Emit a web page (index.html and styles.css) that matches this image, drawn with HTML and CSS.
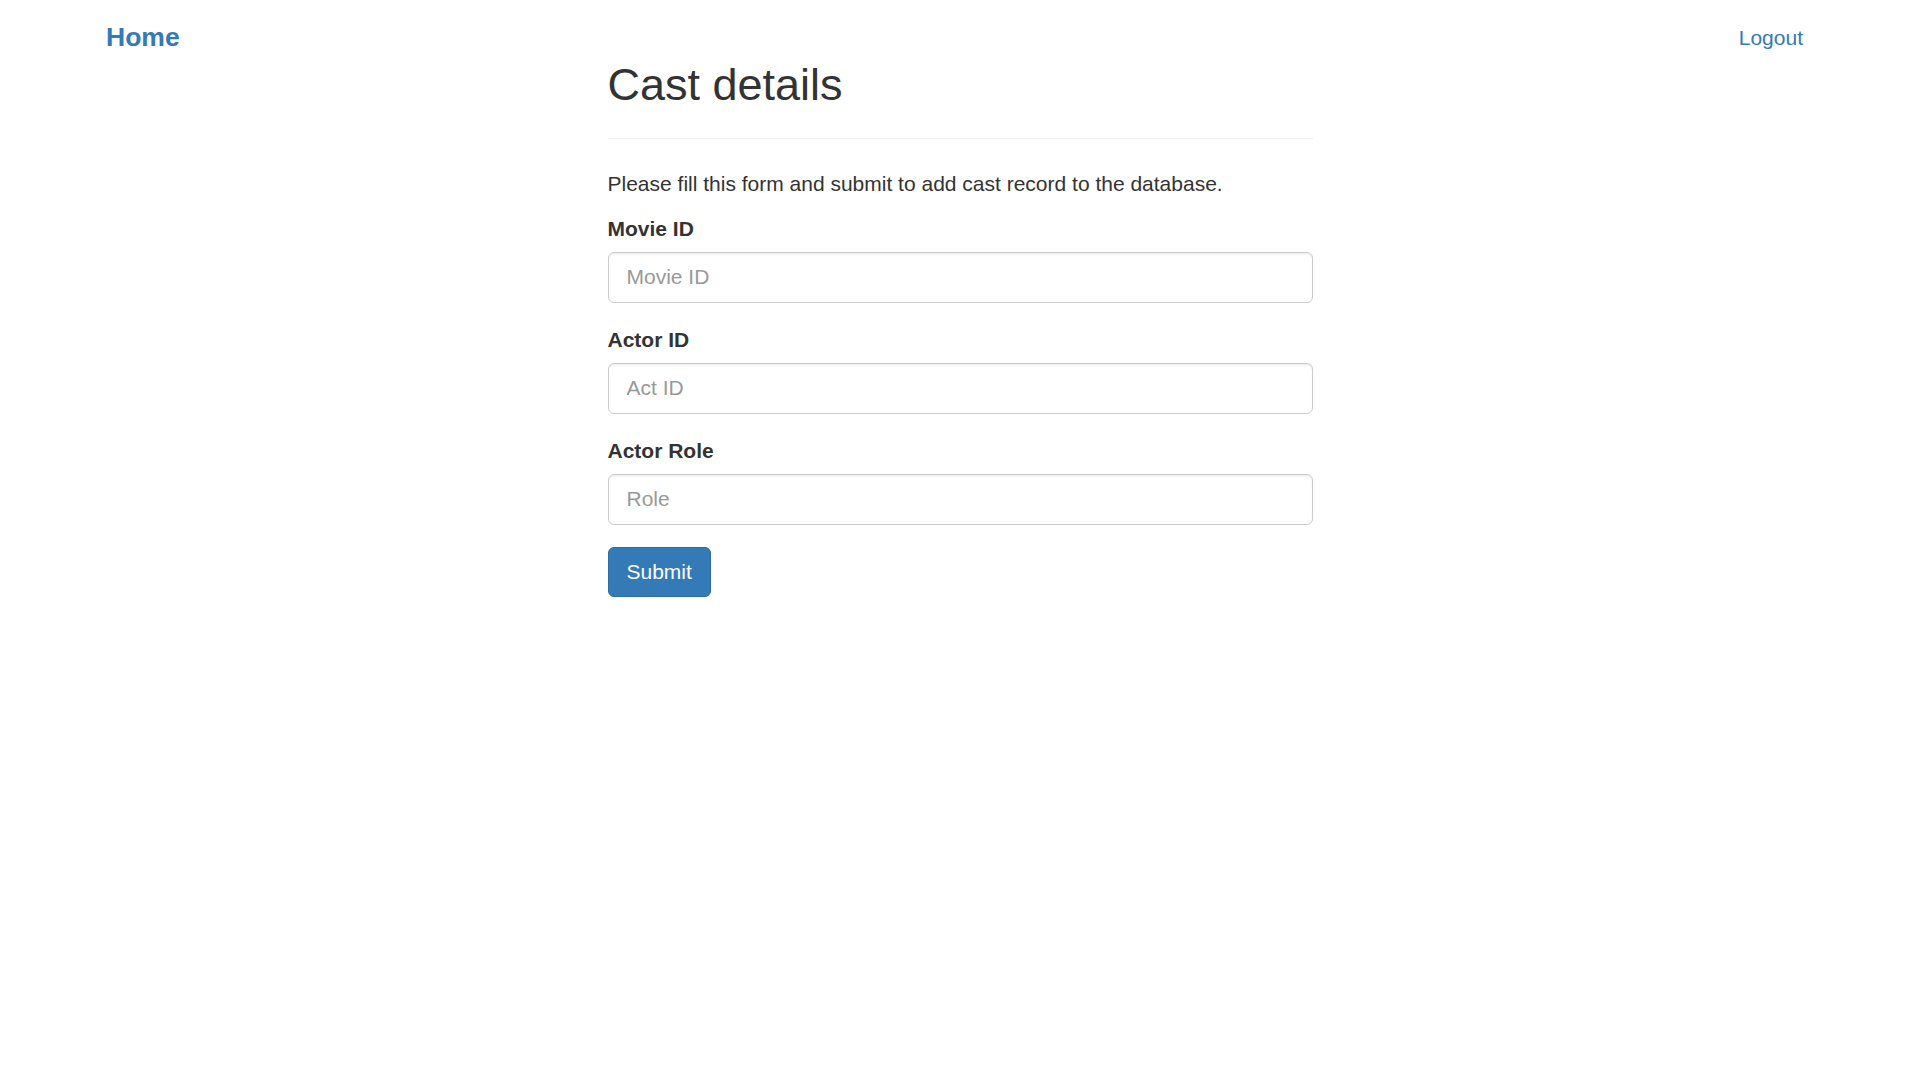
FILE: index.html
```html
<!DOCTYPE html>
<html lang="en">
<head>
<meta charset="utf-8">
<title>Cast details</title>
<link rel="stylesheet" href="styles.css">
</head>
<body>
<header class="topbar">
  <a class="brand" href="#">Home</a>
  <a class="logout" href="#">Logout</a>
</header>
<main class="wrapper">
  <div class="page-header">
    <h2 class="title">Cast details</h2>
  </div>
  <p class="intro">Please fill this form and submit to add cast record to the database.</p>
  <form class="form">
    <div class="form-group">
      <label class="label">Movie ID</label>
      <input class="input" type="text" placeholder="Movie ID">
    </div>
    <div class="form-group">
      <label class="label">Actor ID</label>
      <input class="input" type="text" placeholder="Act ID">
    </div>
    <div class="form-group">
      <label class="label">Actor Role</label>
      <input class="input" type="text" placeholder="Role">
    </div>
    <button class="btn" type="button">Submit</button>
  </form>
</main>
</body>
</html>
```

FILE: styles.css
```css
html, body {
  margin: 0;
  padding: 0;
  background: #fff;
}
body {
  font-family: "Liberation Sans", Arial, Helvetica, sans-serif;
  font-size: 21px;
  line-height: 30px;
  color: #333;
}
.topbar {
  display: flex;
  justify-content: space-between;
  align-items: flex-start;
  padding: 21px 117px 0 106px;
}
.brand {
  font-size: 26.5px;
  font-weight: bold;
  line-height: 30px;
  padding-top: 1px;
  color: #337ab7;
  text-decoration: none;
}
.logout {
  font-size: 21px;
  line-height: 30px;
  padding-top: 2px;
  color: #337ab7;
  text-decoration: none;
}
.wrapper {
  width: 705px;
  margin: 7px auto 0;
}
.page-header {
  padding-bottom: 13.5px;
  margin-bottom: 30px;
  border-bottom: 1px solid #eee;
}
.title {
  margin: 0 0 15px;
  font-size: 45px;
  line-height: 1.1;
  font-weight: 500;
  color: #333;
}
.intro {
  margin: 0 0 15px;
}
.form {
  margin: 0;
}
.form-group {
  margin-bottom: 22.5px;
}
.label {
  display: block;
  font-weight: bold;
  margin-bottom: 7.5px;
}
.input {
  display: block;
  box-sizing: border-box;
  width: 100%;
  height: 51px;
  padding: 9px 18px;
  font-family: inherit;
  font-size: 21px;
  line-height: 30px;
  color: #555;
  background: #fff;
  border: 1px solid #ccc;
  border-radius: 6px;
  box-shadow: inset 0 1.5px 1.5px rgba(0, 0, 0, 0.075);
  outline: none;
}
.input::placeholder {
  color: #999;
  opacity: 1;
}
.btn {
  display: inline-block;
  padding: 9px 18px;
  font-family: inherit;
  font-size: 21px;
  line-height: 30px;
  color: #fff;
  background: #337ab7;
  border: 1px solid #2e6da4;
  border-radius: 6px;
  cursor: pointer;
}
```
